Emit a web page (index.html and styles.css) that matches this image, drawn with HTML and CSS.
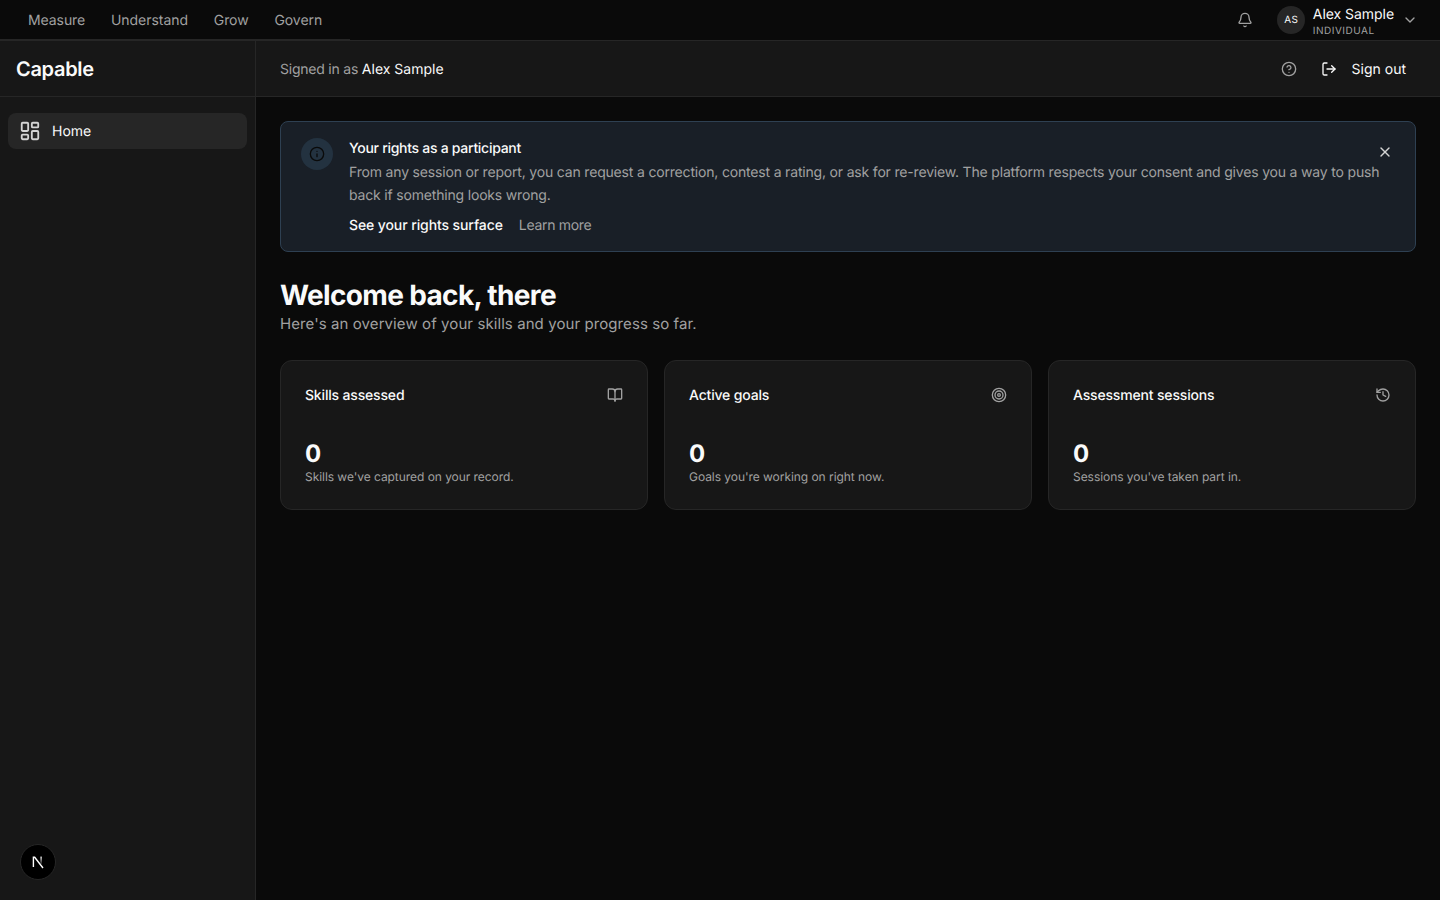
FILE: index.html
```html
<!DOCTYPE html>
<html lang="en">
<head>
    <meta charset="UTF-8">
    <meta name="viewport" content="width=device-width, initial-scale=1.0">
    <title>Capable</title>
    <link rel="stylesheet" href="styles.css">
</head>
<body>
    <header class="topbar">
        <nav class="topnav">
            <a>Measure</a>
            <a>Understand</a>
            <a>Grow</a>
            <a>Govern</a>
        </nav>
        <div class="topbar-right">
            <svg class="bell" width="16" height="16" viewBox="0 0 24 24" fill="none" stroke="currentColor" stroke-width="2" stroke-linecap="round" stroke-linejoin="round">
                <path d="M10.268 21a2 2 0 0 0 3.464 0"/>
                <path d="M3.262 15.326A1 1 0 0 0 4 17h16a1 1 0 0 0 .74-1.673C19.41 13.956 18 12.499 18 8A6 6 0 0 0 6 8c0 4.499-1.411 5.956-2.738 7.326"/>
            </svg>
            <div class="user">
                <div class="avatar">AS</div>
                <div class="user-text">
                    <div class="user-name">Alex Sample</div>
                    <div class="user-role">INDIVIDUAL</div>
                </div>
                <svg class="chevron" width="16" height="16" viewBox="0 0 24 24" fill="none" stroke="currentColor" stroke-width="2" stroke-linecap="round" stroke-linejoin="round">
                    <path d="m6 9 6 6 6-6"/>
                </svg>
            </div>
        </div>
    </header>

    <div class="shell">
        <aside class="sidebar">
            <div class="brand">Capable</div>
            <div class="side-nav">
                <a class="side-item">
                    <svg width="22" height="22" viewBox="0 0 24 24" fill="none" stroke="currentColor" stroke-width="2" stroke-linecap="round" stroke-linejoin="round">
                        <rect width="7" height="9" x="3" y="3" rx="1"/>
                        <rect width="7" height="5" x="14" y="3" rx="1"/>
                        <rect width="7" height="9" x="14" y="12" rx="1"/>
                        <rect width="7" height="5" x="3" y="16" rx="1"/>
                    </svg>
                    <span>Home</span>
                </a>
            </div>
            <div class="dev-badge">
                <svg width="16" height="16" viewBox="0 0 16 16" fill="none">
                    <defs>
                        <linearGradient id="nBar" x1="0" y1="0" x2="0" y2="1">
                            <stop offset="0" stop-color="#fff"/>
                            <stop offset="1" stop-color="#fff" stop-opacity="0.15"/>
                        </linearGradient>
                    </defs>
                    <path d="M3.4 13V3.2h1.3L13 14" stroke="#fff" stroke-width="1.4" fill="none"/>
                    <rect x="10.4" y="2.6" width="1.4" height="7.4" fill="url(#nBar)"/>
                </svg>
            </div>
        </aside>

        <div class="main">
            <div class="subheader">
                <div class="signed-in">Signed in as <span>Alex Sample</span></div>
                <div class="subheader-right">
                    <svg class="help" width="16" height="16" viewBox="0 0 24 24" fill="none" stroke="currentColor" stroke-width="2" stroke-linecap="round" stroke-linejoin="round">
                        <circle cx="12" cy="12" r="10"/>
                        <path d="M9.09 9a3 3 0 0 1 5.83 1c0 2-3 3-3 3"/>
                        <path d="M12 17h.01"/>
                    </svg>
                    <a class="sign-out">
                        <svg width="16" height="16" viewBox="0 0 24 24" fill="none" stroke="currentColor" stroke-width="2" stroke-linecap="round" stroke-linejoin="round">
                            <path d="M9 21H5a2 2 0 0 1-2-2V5a2 2 0 0 1 2-2h4"/>
                            <path d="m16 17 5-5-5-5"/>
                            <path d="M21 12H9"/>
                        </svg>
                        <span>Sign out</span>
                    </a>
                </div>
            </div>

            <main class="content">
                <section class="notice">
                    <div class="notice-icon">
                        <svg width="16" height="16" viewBox="0 0 24 24" fill="none" stroke="currentColor" stroke-width="2" stroke-linecap="round" stroke-linejoin="round">
                            <circle cx="12" cy="12" r="10"/>
                            <path d="M12 16v-4"/>
                            <path d="M12 8h.01"/>
                        </svg>
                    </div>
                    <div class="notice-body">
                        <div class="notice-title">Your rights as a participant</div>
                        <p class="notice-text">From any session or report, you can request a correction, contest a rating, or ask for re-review. The platform respects your consent and gives you a way to push back if something looks wrong.</p>
                        <div class="notice-links">
                            <a class="link-primary">See your rights surface</a>
                            <a class="link-muted">Learn more</a>
                        </div>
                    </div>
                    <svg class="notice-close" width="16" height="16" viewBox="0 0 24 24" fill="none" stroke="currentColor" stroke-width="2" stroke-linecap="round" stroke-linejoin="round">
                        <path d="M18 6 6 18"/>
                        <path d="m6 6 12 12"/>
                    </svg>
                </section>

                <h1>Welcome back, there</h1>
                <p class="lead">Here's an overview of your skills and your progress so far.</p>

                <div class="cards">
                    <div class="card">
                        <div class="card-head">
                            <span>Skills assessed</span>
                            <svg width="16" height="16" viewBox="0 0 24 24" fill="none" stroke="currentColor" stroke-width="2" stroke-linecap="round" stroke-linejoin="round">
                                <path d="M12 7v14"/>
                                <path d="M3 18a1 1 0 0 1-1-1V4a1 1 0 0 1 1-1h5a4 4 0 0 1 4 4 4 4 0 0 1 4-4h5a1 1 0 0 1 1 1v13a1 1 0 0 1-1 1h-6a3 3 0 0 0-3 3 3 3 0 0 0-3-3z"/>
                            </svg>
                        </div>
                        <div class="card-value">0</div>
                        <div class="card-note">Skills we've captured on your record.</div>
                    </div>
                    <div class="card">
                        <div class="card-head">
                            <span>Active goals</span>
                            <svg width="16" height="16" viewBox="0 0 24 24" fill="none" stroke="currentColor" stroke-width="2" stroke-linecap="round" stroke-linejoin="round">
                                <circle cx="12" cy="12" r="10"/>
                                <circle cx="12" cy="12" r="6"/>
                                <circle cx="12" cy="12" r="2"/>
                            </svg>
                        </div>
                        <div class="card-value">0</div>
                        <div class="card-note">Goals you're working on right now.</div>
                    </div>
                    <div class="card">
                        <div class="card-head">
                            <span>Assessment sessions</span>
                            <svg width="16" height="16" viewBox="0 0 24 24" fill="none" stroke="currentColor" stroke-width="2" stroke-linecap="round" stroke-linejoin="round">
                                <path d="M3 12a9 9 0 1 0 9-9 9.75 9.75 0 0 0-6.74 2.74L3 8"/>
                                <path d="M3 3v5h5"/>
                                <path d="M12 7v5l4 2"/>
                            </svg>
                        </div>
                        <div class="card-value">0</div>
                        <div class="card-note">Sessions you've taken part in.</div>
                    </div>
                </div>
            </main>
        </div>
    </div>
</body>
</html>
```

FILE: styles.css
```css
* {
    box-sizing: border-box;
}
html, body {
    height: 100%;
}
body {
    margin: 0;
    height: 900px;
    overflow: hidden;
    display: flex;
    flex-direction: column;
    background: #0a0a0a;
    color: #fafafa;
    font-family: Inter, "Liberation Sans", sans-serif;
    font-size: 14px;
    text-rendering: geometricPrecision;
}
p, h1 {
    margin: 0;
}

/* top bar */
.topbar {
    height: 41px;
    flex: none;
    display: flex;
    justify-content: space-between;
    align-items: center;
    padding: 0 22px 0 0;
    border-bottom: 1px solid #262626;
}
.topnav {
    align-self: stretch;
    display: flex;
    align-items: center;
    padding: 0 15px;
    box-shadow: inset 0 -1px 0 #262626;
}
.topnav a {
    padding: 0 12.9px;
    color: #a1a1a1;
    letter-spacing: -0.05px;
}
.topbar-right {
    display: flex;
    align-items: center;
    gap: 24px;
}
.bell {
    color: #a1a1a1;
}
.user {
    display: flex;
    align-items: center;
}
.avatar {
    width: 28px;
    height: 28px;
    border-radius: 50%;
    background: #262626;
    display: flex;
    align-items: center;
    justify-content: center;
    font-size: 10px;
    letter-spacing: 0.3px;
}
.user-text {
    margin: 4px 8px 0 7.5px;
}
.user-name {
    line-height: 16px;
    letter-spacing: -0.05px;
}
.user-role {
    margin-top: 1px;
    font-size: 10px;
    line-height: 14px;
    color: #a1a1a1;
    letter-spacing: 0.5px;
}
.chevron {
    color: #a1a1a1;
}

/* shell */
.shell {
    flex: 1;
    display: flex;
    min-height: 0;
}
.sidebar {
    width: 256px;
    flex: none;
    display: flex;
    flex-direction: column;
    background: #171717;
    border-right: 1px solid #262626;
}
.brand {
    height: 56px;
    flex: none;
    display: flex;
    align-items: center;
    padding-left: 16px;
    font-size: 20px;
    font-weight: 600;
    letter-spacing: -0.3px;
    border-bottom: 1px solid #262626;
}
.side-nav {
    flex: 1;
    padding: 16px 8px;
}
.side-item {
    height: 36px;
    display: flex;
    align-items: center;
    gap: 11px;
    padding-left: 11px;
    border-radius: 8px;
    background: #262626;
}
.side-item svg {
    color: #d4d4d4;
}
.dev-badge {
    width: 36px;
    height: 36px;
    margin: 0 0 20px 20px;
    border-radius: 50%;
    background: #000;
    border: 1px solid #262626;
    display: flex;
    align-items: center;
    justify-content: center;
}

/* main */
.main {
    flex: 1;
    min-width: 0;
    display: flex;
    flex-direction: column;
}
.subheader {
    height: 56px;
    flex: none;
    display: flex;
    justify-content: space-between;
    align-items: center;
    padding: 0 34px 0 24px;
    background: #171717;
    border-bottom: 1px solid #262626;
}
.signed-in {
    padding-top: 2px;
    color: #a1a1a1;
    letter-spacing: -0.22px;
}
.signed-in span {
    color: #fafafa;
    letter-spacing: 0;
}
.subheader-right {
    display: flex;
    align-items: center;
    gap: 24px;
}
.help {
    color: #a1a1a1;
}
.sign-out {
    display: flex;
    align-items: center;
    gap: 15px;
}
.sign-out span {
    padding-top: 2px;
}

.content {
    padding: 24px;
}
.notice {
    position: relative;
    display: flex;
    gap: 16px;
    height: 131px;
    padding: 16px 20px;
    background: #191f27;
    border: 1px solid #2e4052;
    border-radius: 8px;
}
.notice-icon {
    width: 32px;
    height: 32px;
    flex: none;
    border-radius: 50%;
    background: #233240;
    color: #0a0a0a;
    display: flex;
    align-items: center;
    justify-content: center;
}
.notice-body {
    padding-top: 1px;
}
.notice-title {
    font-weight: 500;
    line-height: 20px;
    letter-spacing: -0.28px;
}
.notice-text {
    margin-top: 2px;
    color: #a1a1a1;
    line-height: 23px;
    letter-spacing: -0.18px;
    padding-right: 12px;
}
.notice-links {
    display: flex;
    gap: 16px;
    margin-top: 9px;
    line-height: 20px;
}
.link-primary {
    font-weight: 500;
    letter-spacing: -0.1px;
}
.link-muted {
    color: #a1a1a1;
    letter-spacing: -0.3px;
}
.notice-close {
    position: absolute;
    top: 22px;
    right: 22px;
    color: #d4d4d4;
}

h1 {
    margin-top: 24px;
    font-size: 28px;
    line-height: 38px;
    font-weight: 700;
    letter-spacing: -0.65px;
}
.lead {
    color: #a1a1a1;
    font-size: 15px;
    line-height: 20px;
    letter-spacing: 0.085px;
}
.cards {
    display: grid;
    grid-template-columns: repeat(3, 1fr);
    gap: 16px;
    margin-top: 26px;
}
.card {
    height: 150px;
    padding: 24px;
    background: #171717;
    border: 1px solid #262626;
    border-radius: 12px;
}
.card-head {
    display: flex;
    justify-content: space-between;
    align-items: center;
    height: 20px;
    font-weight: 500;
    letter-spacing: -0.17px;
}
.card-head svg {
    color: #a1a1a1;
}
.card-value {
    margin-top: 33px;
    font-size: 24px;
    font-weight: 700;
    line-height: 31px;
}
.card-note {
    font-size: 12px;
    line-height: 16px;
    color: #a1a1a1;
    letter-spacing: -0.05px;
}
```
